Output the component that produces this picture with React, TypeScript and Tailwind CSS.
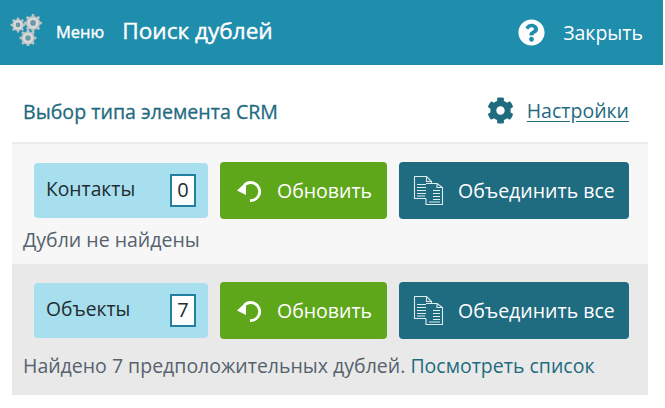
import { FaCog, FaQuestionCircle } from "react-icons/fa";

const font = { fontFamily: '"Open Sans", "Noto Sans", sans-serif' };

// три серые шестерёнки в шапке
function cogPath(cx: number, cy: number, r: number) {
  const pts: string[] = [];
  const teeth = 8;
  for (let i = 0; i < teeth; i++) {
    const a = (i / teeth) * Math.PI * 2;
    const w = Math.PI / teeth / 2;
    [
      [r * 0.78, a - w * 1.2],
      [r, a - w * 0.6],
      [r, a + w * 0.6],
      [r * 0.78, a + w * 1.2],
    ].forEach(([rr, t]) => pts.push(`${(cx + rr * Math.cos(t)).toFixed(2)},${(cy + rr * Math.sin(t)).toFixed(2)}`));
  }
  return `M${pts.join("L")}Z`;
}

function Gears() {
  const cogs = [
    { x: 18, y: 23, r: 7.5 },
    { x: 33, y: 21, r: 9 },
    { x: 28, y: 36, r: 8.5 },
  ];
  return (
    <svg width="44" height="44" viewBox="0 0 44 44" className="shrink-0">
      {cogs.map((c, i) => (
        <g key={i}>
          <path d={cogPath(c.x, c.y, c.r)} fill="#b9c2c5" />
          <circle cx={c.x} cy={c.y} r={c.r * 0.62} fill="#d8dbdb" />
          <circle cx={c.x} cy={c.y} r={c.r * 0.32} fill="#6f98a6" />
        </g>
      ))}
    </svg>
  );
}

function UndoIcon() {
  return (
    <svg width="26" height="24" viewBox="0 0 26 24" fill="none" className="shrink-0">
      <path d="M8 5.5A9 9 0 1 1 13 21.5" stroke="#fff" strokeWidth="2.8" />
      <path d="M0 11.5L9 3V16Z" fill="#fff" />
    </svg>
  );
}

function DocsIcon() {
  return (
    <svg width="31" height="31" viewBox="0 0 31 31" fill="none" stroke="#dcecf1" strokeWidth="1.1" className="shrink-0">
      <path d="M1.5 1.5H13.5L18.5 6.5V23.5H1.5Z" fill="#1f6b7f" />
      <path d="M13.5 1.5V6.5H18.5" />
      <path d="M4 9.5H16M4 12.5H16M4 15.5H16M4 18.5H16M4 21H12" />
      <path d="M13 8.5H24L29.5 12.5V29.5H13V23.5" fill="#1f6b7f" />
      <path d="M24 8.5V12.5H29.5" />
      <path d="M20 15.5H27M20 18.5H27M20 21.5H27M20 24.5H27M16 27H27" />
    </svg>
  );
}

function Row({ label, count, children, tint, rowClass, textClass }: {
  label: string;
  count: number;
  children: React.ReactNode;
  tint: string;
  rowClass: string;
  textClass: string;
}) {
  return (
    <div className={`${tint} ${rowClass} pl-[22px]`}>
      <div className="flex items-center">
        <div className="flex h-[55px] w-[174px] items-center justify-between rounded-[4px] bg-[#a8dfee] pl-[12px] pr-[12px] text-[19.3px] text-[#222b30]">
          <span className="-mt-[2px]">{label}</span>
          <span className="-mt-[1px] flex h-[33px] w-[26px] items-center justify-center border-2 border-[#237f9e] bg-white text-[20px]">{count}</span>
        </div>
        <button className="ml-[12px] flex h-[57px] w-[167px] items-center rounded-[4px] bg-[#5ea71a] pl-[17px] text-[19.5px] text-white">
          <UndoIcon />
          <span className="ml-[14px]">Обновить</span>
        </button>
        <button className="ml-[12px] flex h-[57px] w-[230px] items-center rounded-[4px] bg-[#1f6b7f] pl-[14px] text-[19.5px] text-white">
          <DocsIcon />
          <span className="ml-[14px]">Объединить все</span>
        </button>
      </div>
      <div className={`${textClass} -ml-[11px] text-[19.5px] text-[#56626d]`}>{children}</div>
    </div>
  );
}

export default function App() {
  return (
    <div className="h-[408px] w-[665px] overflow-hidden bg-white" style={font}>
      <div className="w-[663px]">
        <header className="flex h-[65px] items-center bg-[#1f8dac] text-white">
          <div className="-mt-[17px]"><Gears /></div>
          <span className="ml-[12px] text-[16.5px] [-webkit-text-stroke:0.4px]">Меню</span>
          <h1 className="ml-[18px] -mt-[3px] text-[22.6px] [-webkit-text-stroke:0.4px]">Поиск дублей</h1>
          <div className="ml-auto flex items-center pr-[20px]">
            <FaQuestionCircle size={27} className="mr-[18px] -mt-[1px] text-white" />
            <span className="text-[19.5px]">Закрыть</span>
          </div>
        </header>
        <div className="flex h-[77px] items-center justify-between pl-[23px] pr-[34px]">
          <h2 className="mt-[17px] text-[19.6px] text-[#1f6b7f] [-webkit-text-stroke:0.3px]">Выбор типа элемента CRM</h2>
          <div className="mt-[14px] flex items-center gap-[13px] text-[#1f6b7f]">
            <FaCog size={27} />
            <a className="text-[19.5px] underline underline-offset-[3px]">Настройки</a>
          </div>
        </div>
        <div className="mx-[12px] w-[636px] border-t-2 border-[#ececec]">
          <Row label="Контакты" count={0} tint="bg-[#f7f7f7]" rowClass="h-[120px] pt-[18px]" textClass="mt-[6px]">
            Дубли не найдены
          </Row>
          <Row label="Объекты" count={7} tint="bg-[#e9e9e9]" rowClass="h-[131px] pt-[18px]" textClass="mt-[12px]">
            Найдено 7 предположительных дублей. <a className="text-[#1f6b7f]">Посмотреть список</a>
          </Row>
        </div>
      </div>
    </div>
  );
}
